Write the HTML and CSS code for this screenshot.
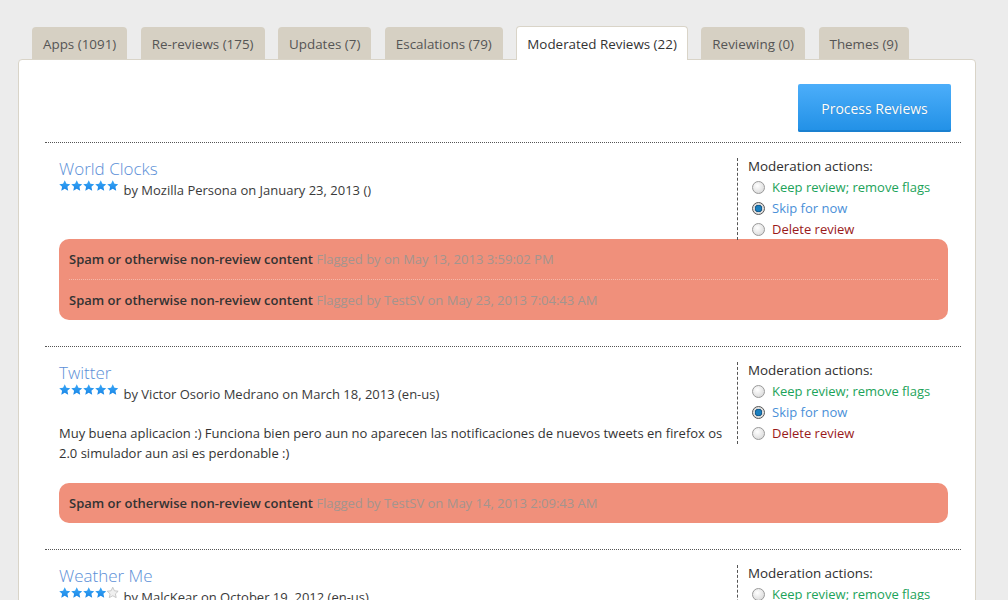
FILE: index.html
```html
<!DOCTYPE html>
<html>
<head>
<meta charset="utf-8">
<link rel="stylesheet" href="styles.css">
</head>
<body>
<svg width="0" height="0" class="defs">
  <defs>
    <linearGradient id="sg" x1="0" y1="0" x2="0" y2="1">
      <stop offset="0" stop-color="#3aa8f8"/>
      <stop offset="1" stop-color="#1a86e6"/>
    </linearGradient>
    <symbol id="star" viewBox="0 0 24 24">
      <path d="M12 .6l3.5 7.3 8 .9-5.9 5.5 1.6 7.9L12 18.3l-7.2 3.9 1.6-7.9L.5 8.8l8-.9z"/>
    </symbol>
  </defs>
</svg>
<div class="page">
  <ul class="tabs">
    <li class="tab">Apps (1091)</li>
    <li class="tab">Re-reviews (175)</li>
    <li class="tab">Updates (7)</li>
    <li class="tab">Escalations (79)</li>
    <li class="tab active">Moderated Reviews (22)</li>
    <li class="tab">Reviewing (0)</li>
    <li class="tab">Themes (9)</li>
  </ul>
  <div class="panel">
    <div class="toolbar">
      <button class="process">Process Reviews</button>
    </div>

    <div class="review">
      <div class="row">
        <div class="main">
          <a class="title">World Clocks</a>
          <div class="meta">
            <span class="stars"><svg class="s on"><use href="#star"/></svg><svg class="s on"><use href="#star"/></svg><svg class="s on"><use href="#star"/></svg><svg class="s on"><use href="#star"/></svg><svg class="s on"><use href="#star"/></svg></span>
            by Mozilla Persona on January 23, 2013 ()
          </div>
        </div>
        <div class="actions">
          <div class="act-head">Moderation actions:</div>
          <label class="opt keep"><span class="radio"></span>Keep review; remove flags</label>
          <label class="opt skip"><span class="radio checked"></span>Skip for now</label>
          <label class="opt del"><span class="radio"></span>Delete review</label>
        </div>
      </div>
      <div class="flags">
        <div class="flag"><b>Spam or otherwise non-review content</b> <span class="by">Flagged by on May 13, 2013 3:59:02 PM</span></div>
        <div class="flag"><b>Spam or otherwise non-review content</b> <span class="by">Flagged by TestSV on May 23, 2013 7:04:43 AM</span></div>
      </div>
    </div>

    <div class="review">
      <div class="row">
        <div class="main">
          <a class="title">Twitter</a>
          <div class="meta">
            <span class="stars"><svg class="s on"><use href="#star"/></svg><svg class="s on"><use href="#star"/></svg><svg class="s on"><use href="#star"/></svg><svg class="s on"><use href="#star"/></svg><svg class="s on"><use href="#star"/></svg></span>
            by Victor Osorio Medrano on March 18, 2013 (en-us)
          </div>
          <p class="body">Muy buena aplicacion :) Funciona bien pero aun no aparecen las notificaciones de nuevos tweets en firefox os 2.0 simulador aun asi es perdonable :)</p>
        </div>
        <div class="actions">
          <div class="act-head">Moderation actions:</div>
          <label class="opt keep"><span class="radio"></span>Keep review; remove flags</label>
          <label class="opt skip"><span class="radio checked"></span>Skip for now</label>
          <label class="opt del"><span class="radio"></span>Delete review</label>
        </div>
      </div>
      <div class="flags">
        <div class="flag"><b>Spam or otherwise non-review content</b> <span class="by">Flagged by TestSV on May 14, 2013 2:09:43 AM</span></div>
      </div>
    </div>

    <div class="review">
      <div class="row">
        <div class="main">
          <a class="title">Weather Me</a>
          <div class="meta">
            <span class="stars"><svg class="s on"><use href="#star"/></svg><svg class="s on"><use href="#star"/></svg><svg class="s on"><use href="#star"/></svg><svg class="s on"><use href="#star"/></svg><svg class="s off"><use href="#star"/></svg></span>
            by MalcKear on October 19, 2012 (en-us)
          </div>
        </div>
        <div class="actions">
          <div class="act-head">Moderation actions:</div>
          <label class="opt keep"><span class="radio"></span>Keep review; remove flags</label>
          <label class="opt skip"><span class="radio checked"></span>Skip for now</label>
          <label class="opt del"><span class="radio"></span>Delete review</label>
        </div>
      </div>
    </div>
  </div>
</div>
</body>
</html>
```

FILE: styles.css
```css
html, body {
  margin: 0;
  padding: 0;
  background: #ececec;
  font-family: "Open Sans", "Liberation Sans", sans-serif;
  font-size: 13px;
  color: #333;
  overflow: hidden;
}
.defs { position: absolute; }
.page {
  padding: 27px 32px 0 18px;
}
.tabs {
  list-style: none;
  margin: 0;
  padding: 0 0 0 14px;
  display: flex;
  gap: 13.5px;
  height: 32px;
  position: relative;
  z-index: 1;
}
.tab {
  background: #d6d0c3;
  color: #555;
  font-size: 13.4px;
  padding: 0 11px;
  height: 32px;
  line-height: 34px;
  border-radius: 4px 4px 0 0;
  white-space: nowrap;
}
.tab.active {
  background: #fff;
  color: #333;
  border: 1px solid #d9d4c8;
  border-bottom: none;
  height: 33px;
  margin-top: -1px;
  line-height: 35px;
  padding: 0 10px;
}
.panel {
  background: #fff;
  border: 1px solid #d9d4c8;
  border-radius: 4px;
  padding: 0 14px 0 26px;
  height: 560px;
}
.toolbar {
  display: flex;
  justify-content: flex-end;
  padding: 24px 10px 10px 0;
  border-bottom: 1px dotted #555;
}
.process {
  width: 153px;
  height: 48px;
  border: none;
  border-radius: 2px;
  background: linear-gradient(#4caefa, #2190e6);
  box-shadow: inset 0 -2px 0 #1a80d0;
  color: #fff;
  font-family: "Open Sans", "Liberation Sans", sans-serif;
  font-size: 14px;
  text-shadow: 0 0 1px rgba(0,0,0,0.25);
}
.review {
  padding: 15px 13px 26px 14px;
  border-bottom: 1px dotted #555;
}
.row {
  display: flex;
  align-items: flex-start;
}
.main {
  flex: 1;
}
.title {
  display: block;
  color: #5b8fd7;
  font-size: 17px;
  font-weight: 300;
  line-height: 22px;
}
.meta {
  line-height: 18px;
  padding-top: 1px;
  display: flex;
  align-items: flex-start;
  gap: 5px;
  color: #3a3a3a;
}
.stars {
  display: inline-flex;
  gap: 0.5px;
  margin-top: -1px;
}
.s {
  width: 11.5px;
  height: 11.5px;
}
.s.on { fill: url(#sg); }
.s.off { fill: #f0f0f0; stroke: #b8b8b8; stroke-width: 1.5; }
.body {
  margin: 20px 0 20px;
  line-height: 20px;
  padding-right: 8px;
}
.actions {
  width: 200px;
  border-left: 1px dashed #555;
  padding: 0 0 0 10px;
  margin-bottom: -1px;
  line-height: 21px;
}
.act-head {
  color: #2e2e2e;
  font-size: 13.4px;
  margin-top: -2px;
}
.opt {
  display: flex;
  align-items: center;
  gap: 7px;
  padding-left: 4px;
}
.keep { color: #1ca35a; }
.skip { color: #4a8fd8; }
.del { color: #9a1a1a; }
.radio {
  width: 11px;
  height: 11px;
  border-radius: 50%;
  border: 1px solid #999;
  background: radial-gradient(circle at 40% 35%, #fff, #d2d2d2);
  flex: none;
}
.radio.checked {
  border-color: #555;
  background: radial-gradient(circle, #1a7fbf 0 2.5px, #0c4a78 3.5px, #d8d8d8 4px, #f2f2f2 100%);
}
.flags {
  background: #f0907b;
  border-radius: 10px;
  padding: 0 10px;
}
.flag {
  height: 40px;
  line-height: 40px;
  white-space: nowrap;
}
.flag + .flag {
  border-top: 1px dotted #f6b9aa;
  height: 40px;
}
.flag b {
  font-weight: 600;
  color: #333;
}
.by {
  color: #a3958f;
}
```
